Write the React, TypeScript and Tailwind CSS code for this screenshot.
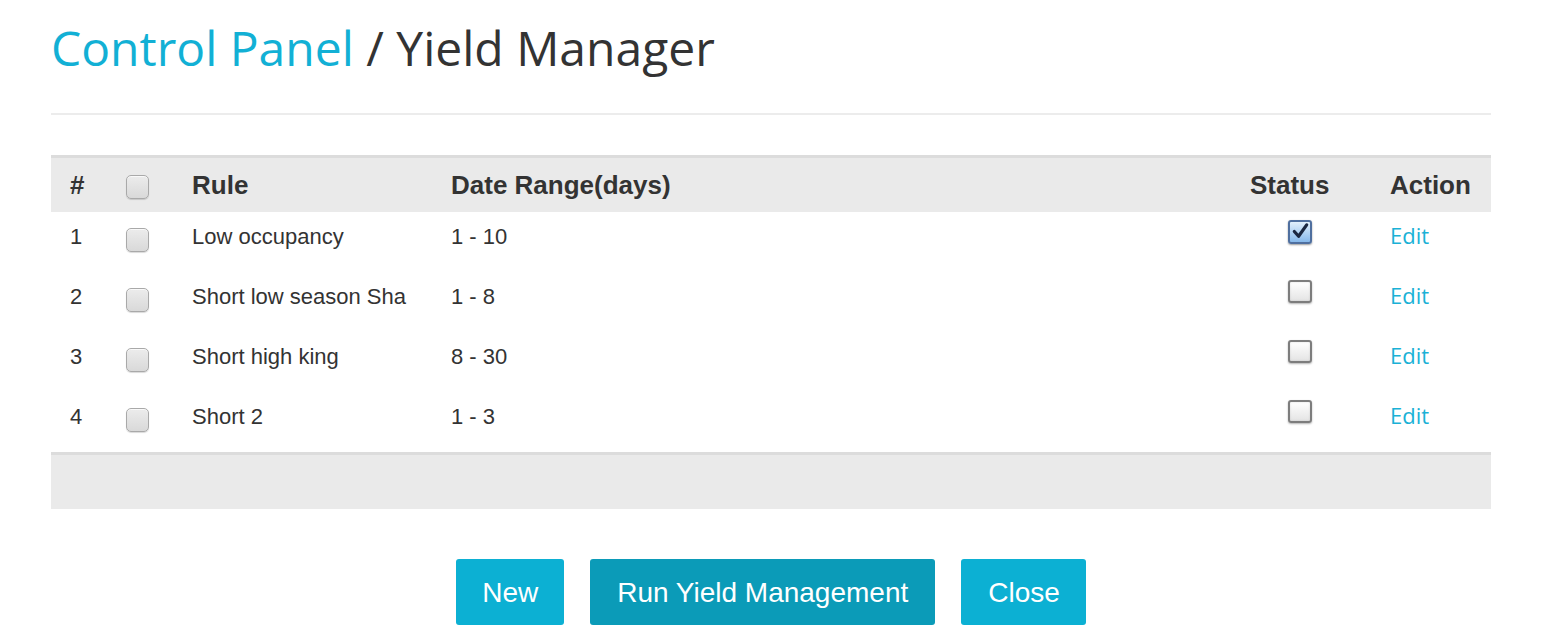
import React from "react";

const rows = [
  { n: "1", rule: "Low occupancy", range: "1 - 10", checked: true },
  { n: "2", rule: "Short low season Sha", range: "1 - 8", checked: false },
  { n: "3", rule: "Short high king", range: "8 - 30", checked: false },
  { n: "4", rule: "Short 2", range: "1 - 3", checked: false },
];

function GrayBox() {
  return (
    <div className="w-[23px] h-[24px] rounded-[5px] border border-[#a9a9a9] bg-gradient-to-b from-[#ececec] to-[#d9d9d9] shadow-[0_1px_1px_rgba(0,0,0,0.15),inset_0_1px_0_rgba(255,255,255,0.7)]" />
  );
}

function StatusBox({ checked }: { checked: boolean }) {
  if (checked) {
    return (
      <div className="relative w-[24px] h-[24px] rounded-[3px] border-2 border-[#4f6f9f] bg-gradient-to-b from-[#e2f0fc] to-[#86b8ea] shadow-[0_1px_2px_rgba(0,0,0,0.4)]">
        <svg viewBox="0 0 20 20" className="absolute left-[1px] top-[0px] w-[19px] h-[19px]">
          <path d="M3.5 10 L8 15 L16.5 3" fill="none" stroke="#1b2740" strokeWidth="3.4" strokeLinecap="round" strokeLinejoin="round" />
        </svg>
      </div>
    );
  }
  return (
    <div className="w-[24px] h-[23px] rounded-[3px] border-2 border-[#7d7d7d] bg-gradient-to-b from-[#ffffff] to-[#e4e4e4] shadow-[0_1px_2px_rgba(0,0,0,0.3),inset_0_0_2px_rgba(0,0,0,0.15)]" />
  );
}

const grid = "grid grid-cols-[56px_66px_259px_799px_140px_120px]";

export default function App() {
  return (
    <div className="bg-white min-h-[629px] w-[1560px] overflow-hidden">
      <div className="ml-[51px] w-[1440px]">
        <h1
          className="pt-[22px] text-[48px] leading-[52.8px] font-normal text-[#333333]"
          style={{ fontFamily: '"Open Sans", sans-serif' }}
        >
          <span className="text-[#12b0d5]">Control Panel</span> / Yield Manager
        </h1>
        <div className="mt-[38px] h-[2px] bg-[#ececec]" />

        <div
          className="mt-[40px] text-[#333333]"
          style={{ fontFamily: '"Liberation Sans", Arial, sans-serif' }}
        >
          <div className={`${grid} border-t-[3px] border-[#dcdcdc] bg-[#eaeaea] h-[57px] text-[26px] font-bold leading-[36px]`}>
            <div className="pl-[19px] pt-[9px]">#</div>
            <div className="pl-[19px] pt-[17px]">
              <GrayBox />
            </div>
            <div className="pl-[19px] pt-[9px]">Rule</div>
            <div className="pl-[19px] pt-[9px]">Date Range(days)</div>
            <div className="pl-[19px] pt-[9px]">Status</div>
            <div className="pl-[19px] pt-[9px]">Action</div>
          </div>
          {rows.map((r) => (
            <div key={r.n} className={`${grid} h-[60px] text-[22px] leading-[31.4px]`}>
              <div className="pl-[19px] pt-[9px]">{r.n}</div>
              <div className="pl-[19px] pt-[16px]">
                <GrayBox />
              </div>
              <div className="pl-[19px] pt-[9px]">{r.rule}</div>
              <div className="pl-[19px] pt-[9px]">{r.range}</div>
              <div className="pl-[57px] pt-[8px]">
                <StatusBox checked={r.checked} />
              </div>
              <div
                className="pl-[19px] pt-[8px] text-[#1ab1d6]"
                style={{ fontFamily: '"Open Sans", sans-serif' }}
              >
                Edit
              </div>
            </div>
          ))}
          <div className="border-t-[3px] border-[#dcdcdc] bg-[#eaeaea] h-[57px]" />
        </div>

        <div
          className="mt-[50px] flex justify-center gap-[26px] text-white text-[28px]"
          style={{ fontFamily: '"Liberation Sans", Arial, sans-serif' }}
        >
          <button className="h-[66px] px-[26px] leading-[68px] rounded-[3px] bg-[#0cb0d3]">New</button>
          <button className="h-[66px] px-[27px] leading-[68px] rounded-[3px] bg-[#0b9bb8]">Run Yield Management</button>
          <button className="h-[66px] pl-[27px] pr-[26px] leading-[68px] rounded-[3px] bg-[#0cb0d3]">Close</button>
        </div>
      </div>
    </div>
  );
}
